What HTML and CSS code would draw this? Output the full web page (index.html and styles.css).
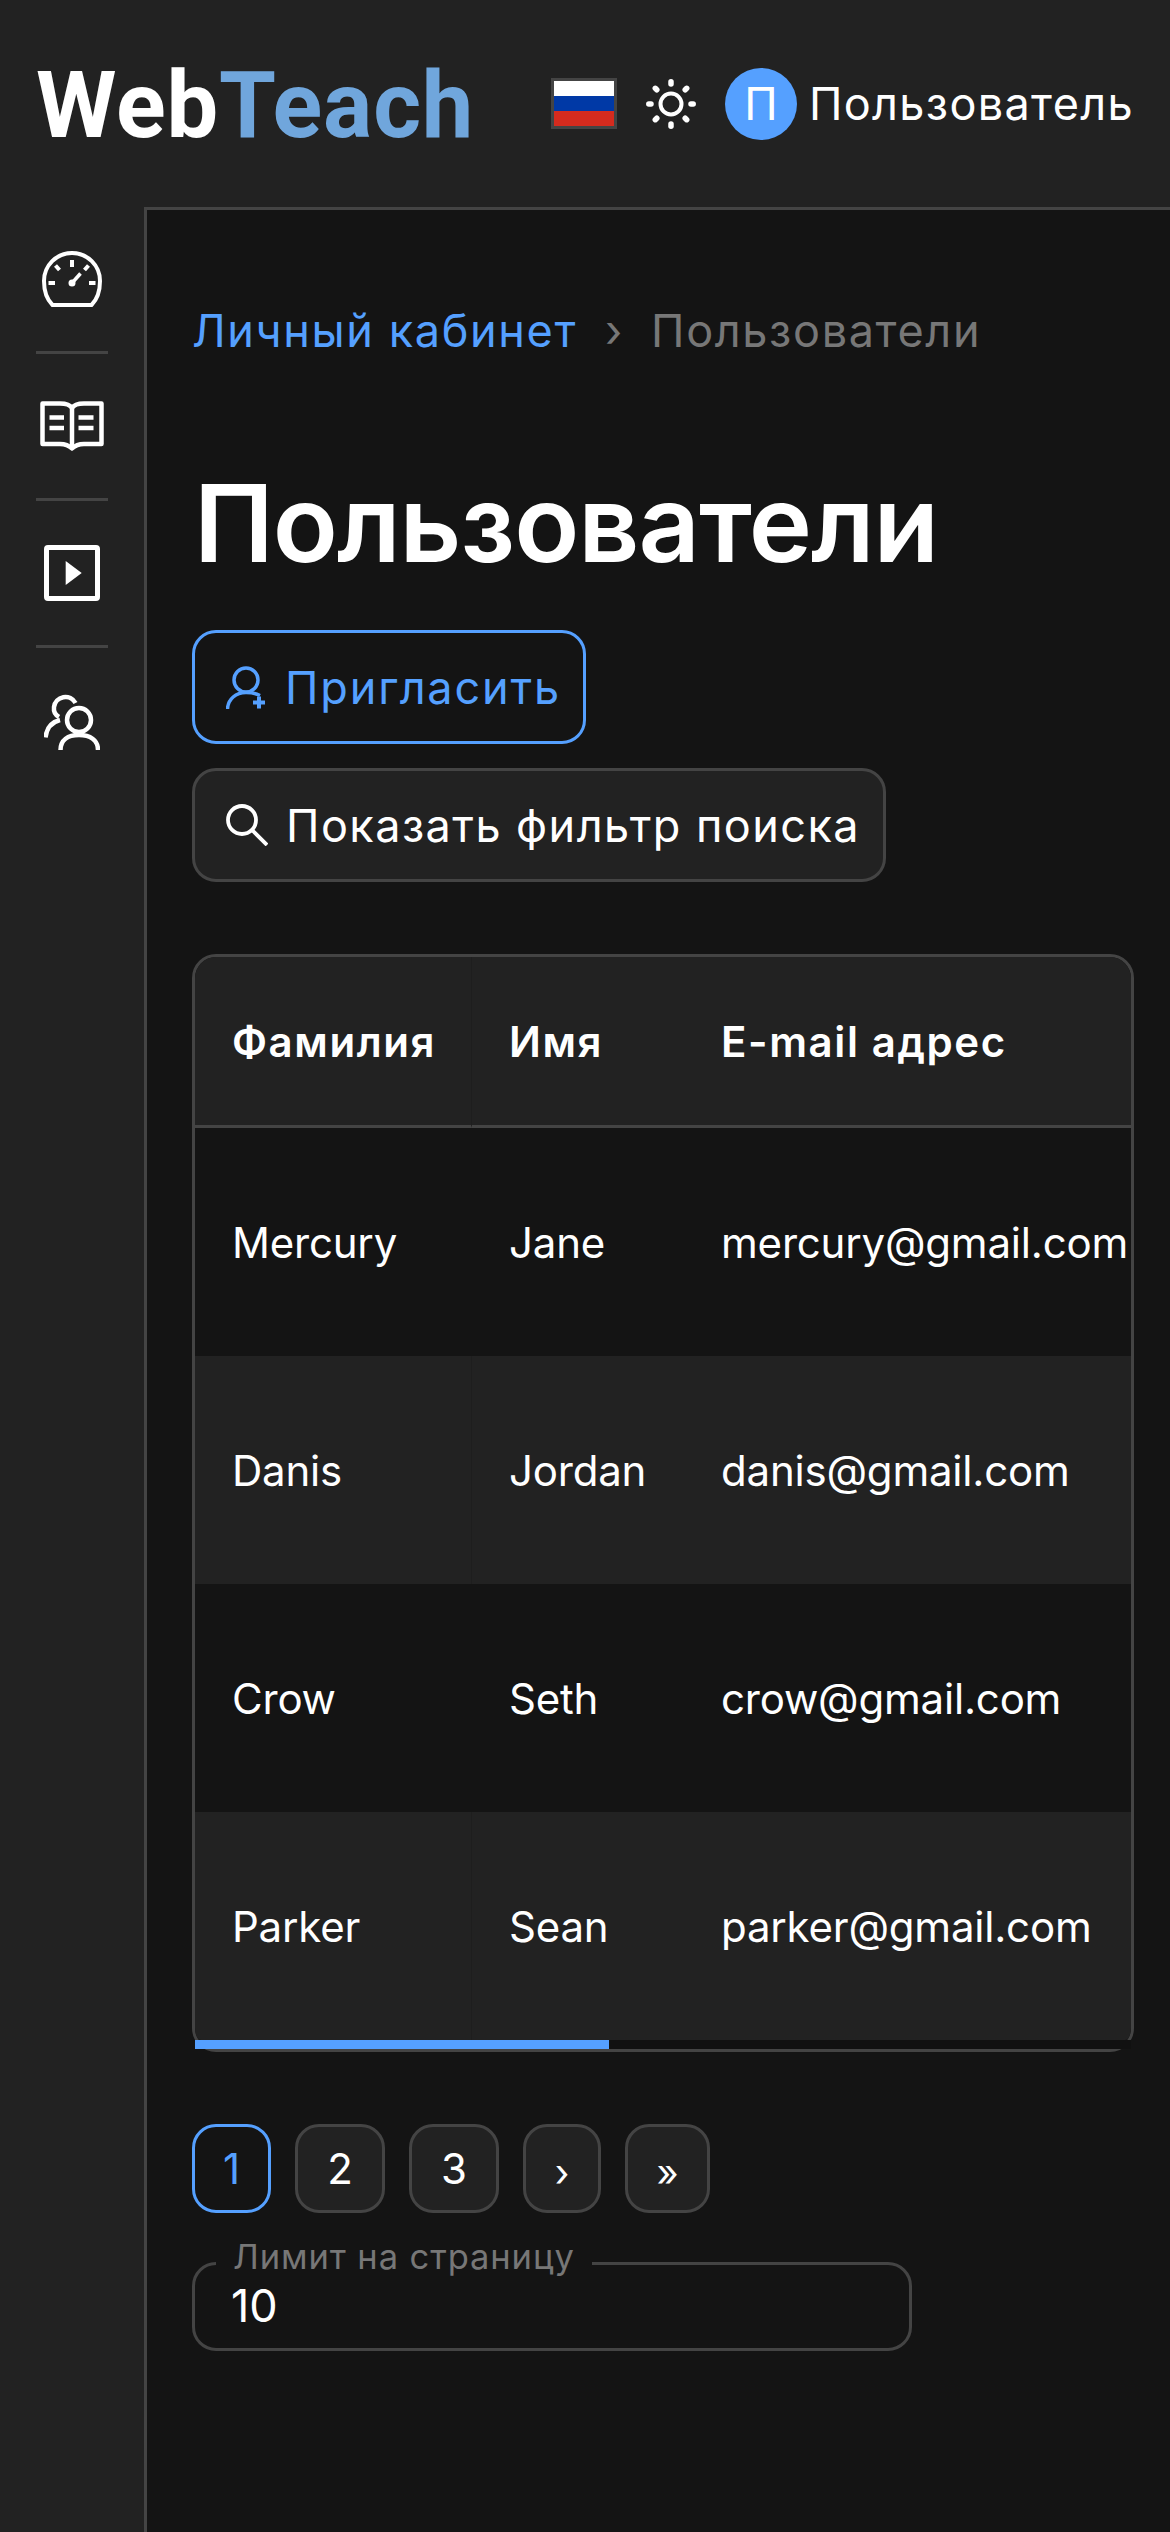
FILE: index.html
```html
<!DOCTYPE html>
<html lang="ru">
<head>
<meta charset="utf-8">
<title>Пользователи</title>
<link rel="stylesheet" href="styles.css">
</head>
<body>
<header class="topbar">
  <div class="logo">Web<span class="logo-accent">Teach</span></div>
  <div class="top-right">
    <div class="flag"></div>
    <svg class="sun" viewBox="0 0 50 50" fill="none" stroke="#fff" stroke-linecap="round">
      <circle cx="25" cy="25" r="10.5" stroke-width="4"/>
      <g stroke-width="5.5">
        <path d="M25 2.8V5"/><path d="M25 45V47.2"/><path d="M2.8 25H5"/><path d="M45 25H47.2"/>
        <path d="M9.3 9.3L10.8 10.8"/><path d="M39.2 39.2L40.7 40.7"/><path d="M9.3 40.7L10.8 39.2"/><path d="M39.2 10.8L40.7 9.3"/>
      </g>
    </svg>
    <div class="avatar">П</div>
    <div class="username">Пользователь</div>
  </div>
</header>
<div class="shell">
  <nav class="sidebar">
    <div class="nav-item">
      <svg class="nav-gauge" viewBox="0 0 64 56" fill="none" stroke="#fff">
        <path d="M12.5 54H51.5C57 48.5 60 40 60 30A28 28 0 0 0 4 30C4 40 7 48.5 12.5 54Z" stroke-width="4"/>
        <path d="M32 9V16M8.5 32H15M49 32H55.5M15.5 14.5L19.5 19M48.5 14.5L44.5 19" stroke-width="4"/>
        <path d="M32 32L40.5 22.5" stroke-width="3.5"/>
        <circle cx="32" cy="32" r="3.5" fill="#fff" stroke="none"/>
      </svg>
    </div>
    <div class="nav-item">
      <svg class="nav-book" viewBox="0 0 64 50" fill="none" stroke="#fff" stroke-width="4.5" stroke-linejoin="round">
        <path d="M2.5 2.5H20C25 2.5 30 3.5 32 7C34 3.5 39 2.5 44 2.5H61.5V43H44C39 43 35 44.5 32 47.5C29 44.5 25 43 20 43H2.5Z"/>
        <path d="M32 7V47"/>
        <path d="M9.500 16.500H24M9.500 27H24M38.500 16.500H53.500M38.500 27H53.500"/>
      </svg>
    </div>
    <div class="nav-item">
      <svg class="nav-play" viewBox="0 0 56 56" fill="none">
        <rect x="2.500" y="2.500" width="51" height="51" rx="1.500" stroke="#fff" stroke-width="5"/>
        <path d="M21.700 16L37.700 28L21.700 40Z" fill="#fff"/>
      </svg>
    </div>
    <div class="nav-item nav-last">
      <svg class="nav-users" viewBox="0 0 56 56" fill="none" stroke="#fff" stroke-width="4.5">
        <circle cx="35" cy="26" r="12"/>
        <path d="M16.500 56C16.500 46 24 41 35 41C46 41 54 46 54 56"/>
        <path d="M31.500 9A11.500 11.500 0 0 0 10 13C9.500 17 11.500 21 15 23"/>
        <path d="M1.500 43.500C2.500 34 8 28 16 26"/>
      </svg>
    </div>
  </nav>
  <main class="content">
    <div class="crumbs">
      <span class="crumb-link">Личный кабинет</span>
      <span class="crumb-sep">›</span>
      <span class="crumb-current">Пользователи</span>
    </div>
    <h1 class="title">Пользователи</h1>
    <div class="actions">
      <button class="btn btn-primary">
        <svg class="btn-icon-invite" viewBox="0 0 40 43" fill="none" stroke="#55a0ff">
          <circle cx="20" cy="14" r="12" stroke-width="3.500"/>
          <path d="M1.500 43C2 33 10 26.500 20 26.500C25 26.500 30 27.500 34 29.500" stroke-width="3.500"/>
          <path d="M27 36.500H39M33 30.500V42.500" stroke-width="4"/>
        </svg>
        <span class="invite-label">Пригласить</span>
      </button>
      <button class="btn btn-dark">
        <svg class="btn-icon-search" viewBox="0 0 42 42" fill="none" stroke="#fff" stroke-width="3.800">
          <circle cx="16" cy="16" r="14"/>
          <path d="M26 26L41 41"/>
        </svg>
        <span class="filter-label">Показать фильтр поиска</span>
      </button>
    </div>
    <div class="table-box">
      <div class="table-clip">
        <table class="users">
          <colgroup><col class="col-last"><col class="col-first"><col class="col-mail"></colgroup>
          <thead>
            <tr><th>Фамилия</th><th>Имя</th><th>E-mail адрес</th></tr>
          </thead>
          <tbody>
            <tr><td>Mercury</td><td>Jane</td><td>mercury@gmail.com</td></tr>
            <tr><td>Danis</td><td>Jordan</td><td>danis@gmail.com</td></tr>
            <tr><td>Crow</td><td>Seth</td><td>crow@gmail.com</td></tr>
            <tr><td>Parker</td><td>Sean</td><td>parker@gmail.com</td></tr>
          </tbody>
        </table>
      </div>
      <div class="scroll-track"><div class="scroll-thumb"></div></div>
    </div>
    <div class="pager">
      <div class="page page-active page-one">1</div>
      <div class="page page-num">2</div>
      <div class="page page-num">3</div>
      <div class="page page-next">›</div>
      <div class="page page-last">»</div>
    </div>
    <fieldset class="limit">
      <legend class="limit-legend">Лимит на страницу</legend>
      <div class="limit-value">10</div>
    </fieldset>
  </main>
</div>
</body>
</html>
```
FILE: styles.css
```css
* { box-sizing: border-box; }
html, body { margin: 0; padding: 0; }
body {
  width: 1170px;
  min-height: 2532px;
  background: #222;
  color: #fff;
  font-family: Inter, "Noto Sans", sans-serif;
  display: flex;
  flex-direction: column;
}
.topbar {
  height: 207px;
  display: flex;
  align-items: center;
  justify-content: space-between;
  padding: 0 36px;
  background: #222;
}
.logo {
  font-family: Roboto, "Liberation Sans", sans-serif;
  font-weight: 700;
  font-size: 92px;
  letter-spacing: 0.8px;
  line-height: 1;
  padding-top: 4px;
  color: #fff;
}
.logo-accent { color: #70a6dc; }
.top-right { display: flex; align-items: center; }
.flag {
  width: 66px;
  height: 51px;
  border: 3px solid #444;
  background: linear-gradient(#fff 0 33.33%, #0039a6 33.33% 66.66%, #d52b1e 66.66%);
}
.sun { width: 50px; height: 50px; margin-left: 29px; }
.avatar {
  width: 72px;
  height: 72px;
  margin-left: 29px;
  border-radius: 50%;
  background: #55a0ff;
  display: flex;
  align-items: center;
  justify-content: center;
  font-size: 45px;
}
.username { margin-left: 12px; font-size: 45px; letter-spacing: 1.35px; line-height: 72px; }

.shell { flex: 1; display: flex; }
.sidebar { width: 144px; flex: none; padding: 0 36px; background: #222; }
.nav-item {
  height: 147px;
  display: flex;
  align-items: center;
  justify-content: center;
  border-bottom: 3px solid #444;
}
.nav-last { border-bottom: none; }
.nav-gauge { width: 64px; height: 56px; }
.nav-book { width: 64px; height: 50px; }
.nav-play { width: 56px; height: 56px; }
.nav-users { width: 56px; height: 56px; }

.content {
  flex: 1;
  min-width: 0;
  background: #141414;
  border-top: 3px solid #444;
  border-left: 3px solid #444;
  padding: 90px 36px 0 45px;
}
.crumbs { height: 60px; display: flex; align-items: center; font-size: 45px; letter-spacing: 1.65px; }
.crumb-link { color: #55a0ff; }
.crumb-sep { margin: 0 27px 0 28px; color: #777; }
.crumb-current { color: #777; }
.title {
  margin: 103px 0 0;
  padding-left: 2px;
  height: 120px;
  font-size: 107px;
  line-height: 120px;
  font-weight: 600;
  letter-spacing: -1px;
}
.actions { margin-top: 47px; display: flex; flex-direction: column; align-items: flex-start; gap: 24px; }
.btn {
  height: 114px;
  display: flex;
  align-items: center;
  border: 3px solid #444;
  border-radius: 24px;
  padding: 0 0 0 31px;
  font-family: inherit;
  font-size: 45px;
  background: #222;
  color: #fff;
}
.btn-primary { width: 394px; background: transparent; border-color: #55a0ff; color: #55a0ff; letter-spacing: 1.85px; }
.btn-dark { width: 694px; letter-spacing: 1.45px; }
.btn-icon-invite { width: 40px; height: 43px; flex: none; }
.btn-icon-search { width: 42px; height: 42px; flex: none; }
.invite-label { margin-left: 19px; white-space: nowrap; }
.filter-label { margin-left: 18px; white-space: nowrap; }

.table-box {
  position: relative;
  margin-top: 72px;
  width: 942px;
  border: 3px solid #444;
  border-radius: 24px;
  padding-bottom: 9px;
}
.table-clip { overflow: hidden; border-radius: 21px 21px 6px 6px / 21px 21px 12px 12px; }
.users { border-collapse: separate; border-spacing: 0; table-layout: fixed; width: 936px; font-size: 42px; letter-spacing: -0.2px; }
.col-last { width: 277px; }
.col-first { width: 213px; }
.col-mail { width: 446px; }
.users th, .users td { padding: 0 0 0 37px; text-align: left; white-space: nowrap; }
.users th:last-child, .users td:last-child { padding-left: 36px; }
.users th {
  height: 171px;
  background: #222;
  border-bottom: 3px solid #444;
  font-weight: 600;
  letter-spacing: 1.6px;
}
.users td { height: 228px; }
.users tbody tr:nth-child(even) td { background: #222; }
.users th:first-child, .users tbody tr:nth-child(even) td:first-child { border-right: 1px solid #1e1e1e; }
.scroll-track { position: absolute; left: 0; right: 0; bottom: 0; height: 9px; background: #111; }
.scroll-thumb { width: 414px; height: 9px; background: #55a0ff; }

.pager { margin-top: 72px; display: flex; gap: 24px; }
.page {
  height: 89px;
  border: 3px solid #444;
  border-radius: 24px;
  background: #222;
  display: flex;
  align-items: center;
  justify-content: center;
  font-size: 42px;
}
.page-one { width: 79px; }
.page-num { width: 90px; }
.page-next { width: 78px; padding-top: 6px; font-size: 38px; }
.page-last { width: 85px; padding-top: 6px; font-size: 38px; }
.page-active { background: transparent; border-color: #55a0ff; color: #55a0ff; }

.limit {
  margin: 26px 0 0;
  padding: 0 0 0 36px;
  width: 720px;
  height: 112px;
  border: 3px solid #444;
  border-radius: 24px;
  min-width: 0;
}
.limit-legend { padding: 0 17px 12px; margin-left: -15px; font-size: 34.5px; letter-spacing: 0.9px; line-height: 36px; color: #777; }
.limit-value { font-size: 45px; line-height: 38px; }
```
